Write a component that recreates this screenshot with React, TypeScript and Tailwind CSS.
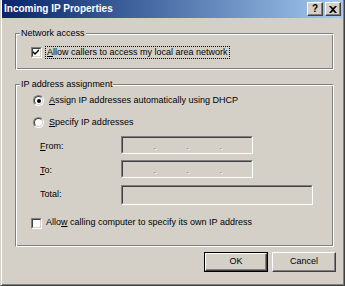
import React from "react";

const font = "font-['Liberation_Sans',Arial,sans-serif]";

function CheckBox({ checked }: { checked?: boolean }) {
  return (
    <div className="w-[11px] h-[11px] shrink-0 border border-t-[#808080] border-l-[#808080] border-r-white border-b-white">
      <div className="w-full h-full bg-white border border-t-[#404040] border-l-[#404040] border-r-[#d4d0c8] border-b-[#d4d0c8] flex items-center justify-center">
        {checked && (
          <svg width="7" height="7" viewBox="0 0 7 7">
            <path d="M0 2 L2 4 L6 0 L6 2 L2 6 L0 4 Z" fill="#000" />
          </svg>
        )}
      </div>
    </div>
  );
}

function Radio({ checked }: { checked?: boolean }) {
  return (
    <div className="w-[11px] h-[11px] shrink-0 rounded-full border border-t-[#808080] border-l-[#808080] border-r-white border-b-white">
      <div className="w-full h-full rounded-full bg-white border border-t-[#404040] border-l-[#404040] border-r-[#d4d0c8] border-b-[#d4d0c8] flex items-center justify-center">
        {checked && <div className="w-[4px] h-[4px] rounded-full bg-black" />}
      </div>
    </div>
  );
}

function Sunken({ w, h, ip }: { w: string; h: string; ip?: boolean }) {
  return (
    <div className={`${w} ${h} shrink-0 border border-t-[#808080] border-l-[#808080] border-r-white border-b-white`}>
      <div className="w-full h-full bg-[#d4d0c8] border border-t-[#404040] border-l-[#404040] border-r-[#d4d0c8] border-b-[#d4d0c8] flex items-end">
        {ip && (
          <div className="flex w-full pb-[1px]">
            {[0, 1, 2].map((i) => (
              <div key={i} className="w-[33px] flex justify-end text-[9px] leading-[9px] text-[#808080] [text-shadow:1px_1px_#fff]">.</div>
            ))}
          </div>
        )}
      </div>
    </div>
  );
}

function Group({ label, h, children, mt }: { label: string; h: string; children: React.ReactNode; mt: string }) {
  return (
    <div className={`relative ml-[13px] w-[319px] ${h} ${mt} border border-t-[#808080] border-l-[#808080] border-r-white border-b-white shadow-[inset_1px_1px_#fff,inset_-1px_-1px_#808080]`}>
      <div className="absolute left-[4px] -top-[7px] px-[1px] bg-[#d4d0c8] text-[9px] leading-[12px] text-black">{label}</div>
      {children}
    </div>
  );
}

function Btn({ label, def }: { label: React.ReactNode; def?: boolean }) {
  return (
    <div className={`w-[64px] h-[20px] ${def ? "border border-black" : ""}`}>
      <div className="w-full h-full bg-[#d4d0c8] border border-t-white border-l-white border-r-[#404040] border-b-[#404040] shadow-[inset_-1px_-1px_#808080] flex items-center justify-center text-[9px] text-black">
        {label}
      </div>
    </div>
  );
}

export default function App() {
  return (
    <div className={`${font} w-[345px] h-[286px] bg-[#d4d0c8] border-l border-r border-b border-l-[#d4d0c8] border-r-[#404040] border-b-[#404040] shadow-[inset_1px_0_#fff,inset_-1px_-1px_#808080] px-[1px] flex flex-col text-black select-none`}>
      <div className="h-[18px] shrink-0 flex items-center pl-[2px] pr-[2px] bg-gradient-to-r from-[#0a246a] to-[#a6caf0]">
        <div className="text-[10px] font-bold text-white leading-none flex-1">Incoming IP Properties</div>
        <div className="flex gap-[2px]">
          <div className="w-[16px] h-[14px] bg-[#d4d0c8] border border-t-white border-l-white border-r-[#404040] border-b-[#404040] shadow-[inset_-1px_-1px_#808080] flex items-center justify-center text-[10px] font-bold leading-none">?</div>
          <div className="w-[16px] h-[14px] bg-[#d4d0c8] border border-t-white border-l-white border-r-[#404040] border-b-[#404040] shadow-[inset_-1px_-1px_#808080] flex items-center justify-center">
            <svg width="8" height="7" viewBox="0 0 8 7">
              <path d="M0 0 L2 0 L4 2 L6 0 L8 0 L5 3.5 L8 7 L6 7 L4 5 L2 7 L0 7 L3 3.5 Z" fill="#000" />
            </svg>
          </div>
        </div>
      </div>

      <Group label="Network access" h="h-[37px]" mt="mt-[15px]">
        <div className="pt-[12px] pl-[15px] flex items-center h-[25px]">
          <CheckBox checked />
          <span className="ml-[3px] px-[1px] border border-dotted border-black text-[9px] leading-[11px]">
            <span className="underline">A</span>llow callers to access my local area network
          </span>
        </div>
      </Group>

      <Group label="IP address assignment" h="h-[163px]" mt="mt-[14px]">
        <div className="pt-[9px] pl-[17px] flex flex-col">
          <div className="flex items-center h-[13px]">
            <Radio checked />
            <span className="ml-[5px] text-[9px]"><span className="underline">A</span>ssign IP addresses automatically using DHCP</span>
          </div>
          <div className="flex items-center h-[13px] mt-[9px]">
            <Radio />
            <span className="ml-[5px] text-[9px]"><span className="underline">S</span>pecify IP addresses</span>
          </div>
        </div>
        <div className="pl-[24px] mt-[7px] flex flex-col">
          <div className="flex items-center">
            <span className="w-[81px] text-[9px] pt-[4px]"><span className="underline">F</span>rom:</span>
            <Sunken w="w-[132px]" h="h-[18px]" ip />
          </div>
          <div className="flex items-center mt-[6px]">
            <span className="w-[81px] text-[9px] pt-[3px]"><span className="underline">T</span>o:</span>
            <Sunken w="w-[132px]" h="h-[18px]" ip />
          </div>
          <div className="flex items-center mt-[7px]">
            <span className="w-[81px] text-[9px]">Total:</span>
            <Sunken w="w-[192px]" h="h-[20px]" />
          </div>
        </div>
        <div className="pl-[15px] mt-[12px] flex items-center h-[12px]">
          <CheckBox />
          <span className="ml-[4px] text-[9px]">Allo<span className="underline">w</span> calling computer to specify its own IP address</span>
        </div>
      </Group>

      <div className="flex gap-[4px] ml-[202px] mt-[5px]">
        <Btn def label="OK" />
        <Btn label="Cancel" />
      </div>
    </div>
  );
}
